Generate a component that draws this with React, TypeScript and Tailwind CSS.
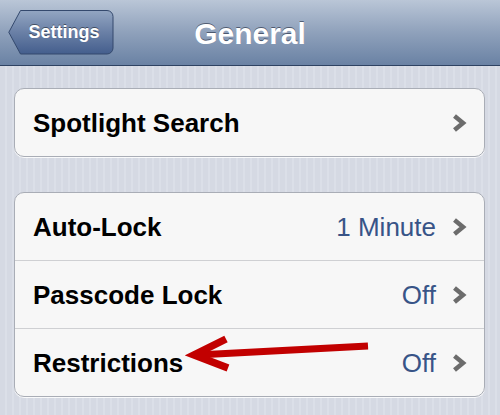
import { Fragment } from 'react';

const font = "font-['Liberation_Sans',Arial,sans-serif]";

function Chevron() {
  return (
    <svg width="15" height="18" viewBox="0 0 15 18" className="shrink-0">
      <polyline points="2.5,2 11,9 2.5,16" fill="none" stroke="#6c6c6c" strokeWidth="4.5" strokeLinejoin="miter" />
    </svg>
  );
}

function Row({ label, value }: { label: string; value?: string }) {
  return (
    <div className="flex h-[67px] items-center pl-[18px] pr-[17px]">
      <span className="flex-1 text-[26px] font-bold text-black leading-none">{label}</span>
      {value && <span className="mr-[16px] text-[26px] text-[#385487] leading-none">{value}</span>}
      <Chevron />
    </div>
  );
}

function Card({ rows }: { rows: { label: string; value?: string }[] }) {
  return (
    <div className="mx-[14px] mr-[15px] overflow-hidden rounded-[10px] border border-[#a9adb6] bg-[#f7f7f7] shadow-[0_1px_0_rgba(255,255,255,0.85)]">
      {rows.map((r, i) => (
        <Fragment key={r.label}>
          {i > 0 && <div className="h-px bg-[#cfd0d3]" />}
          <Row label={r.label} value={r.value} />
        </Fragment>
      ))}
    </div>
  );
}

export default function App() {
  return (
    <div
      className={`relative h-[415px] w-[500px] overflow-hidden bg-[repeating-linear-gradient(90deg,#d5d9e3_0px,#d5d9e3_5px,#dbdfe8_5px,#dbdfe8_7px)] ${font}`}
    >
      {/* nav bar */}
      <div className="relative flex h-[66px] items-center border-b border-[#2e4262] bg-gradient-to-b from-[#bac6d7] via-[#8fa1bb] to-[#6a82a4]">
        <button className="relative ml-[8px] flex h-[45px] w-[106px] items-center justify-center pl-[6px]">
          <svg width="106" height="45" viewBox="0 0 106 45" className="absolute inset-0">
            <defs>
              <linearGradient id="bb" x1="0" y1="0" x2="0" y2="1">
                <stop offset="0" stopColor="#93a6c2" />
                <stop offset="0.5" stopColor="#6a80a6" />
                <stop offset="1" stopColor="#445e8d" />
              </linearGradient>
            </defs>
            <path
              d="M12.5 0.5 H99 A6 6 0 0 1 105 6.5 V38 A6 6 0 0 1 99 44 H12.5 L0.8 22.3 Z"
              fill="url(#bb)"
              stroke="#34496d"
              strokeWidth="1"
            />
          </svg>
          <span className="relative text-[18px] font-bold text-white [text-shadow:0_-1px_0_rgba(0,0,0,0.45)]">Settings</span>
        </button>
        <div className="pointer-events-none absolute left-0 right-0 top-0 flex h-[66px] items-center justify-center">
          <span className="pt-[1px] text-[30px] font-bold text-white [text-shadow:0_-1px_0_rgba(30,40,60,0.6)]">General</span>
        </div>
      </div>

      <div className="pt-[22px]">
        <Card rows={[{ label: 'Spotlight Search' }]} />
      </div>
      <div className="pt-[35px]">
        <Card
          rows={[
            { label: 'Auto-Lock', value: '1 Minute' },
            { label: 'Passcode Lock', value: 'Off' },
            { label: 'Restrictions', value: 'Off' },
          ]}
        />
      </div>

      {/* red annotation arrow */}
      <svg width="190" height="45" viewBox="0 0 190 45" className="absolute left-[185px] top-[330px]">
        <line x1="183" y1="16" x2="12" y2="25" stroke="#c20000" strokeWidth="7" />
        <polyline points="41,9 9,25 43,38" fill="none" stroke="#c20000" strokeWidth="7.5" strokeLinejoin="miter" />
      </svg>
    </div>
  );
}
